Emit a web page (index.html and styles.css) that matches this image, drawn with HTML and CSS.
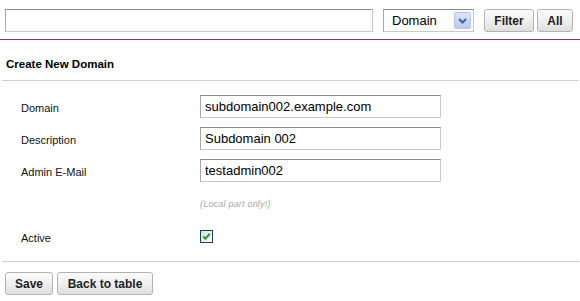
FILE: index.html
```html
<!DOCTYPE html>
<html>
<head>
<meta charset="utf-8">
<link rel="stylesheet" href="styles.css">
</head>
<body>
<div class="topbar">
  <input class="search" type="text" value="">
  <div class="select">
    <span class="select-text">Domain</span>
    <span class="select-arrow">
      <svg width="17" height="17" viewBox="0 0 17 17"><path d="M5 7 L8.5 10.5 L12 7" fill="none" stroke="#4d6185" stroke-width="2"/></svg>
    </span>
  </div>
  <button class="btn btn-filter">Filter</button>
  <button class="btn btn-all">All</button>
</div>
<div class="title">Create New Domain</div>
<div class="form">
  <div class="row row-input">
    <label class="lbl">Domain</label>
    <input class="field" type="text" value="subdomain002.example.com">
  </div>
  <div class="row row-input">
    <label class="lbl">Description</label>
    <input class="field" type="text" value="Subdomain 002">
  </div>
  <div class="row row-input">
    <label class="lbl">Admin E-Mail</label>
    <input class="field" type="text" value="testadmin002">
  </div>
  <div class="row row-hint">
    <span class="lbl"></span>
    <span class="hint">(Local part only!)</span>
  </div>
  <div class="row row-check">
    <label class="lbl">Active</label>
    <span class="check">
      <svg width="11" height="11" viewBox="0 0 11 11"><path d="M2.2 5.4 L4.4 7.8 L8.8 2.8" fill="none" stroke="#2ca02c" stroke-width="2.1"/></svg>
    </span>
  </div>
</div>
<div class="actions">
  <button class="btn btn-save">Save</button>
  <button class="btn btn-back">Back to table</button>
</div>
</body>
</html>
```
FILE: styles.css
```css
html, body {
  margin: 0;
  padding: 0;
  background: #fff;
  font-family: "Liberation Sans", Arial, sans-serif;
  color: #000;
}
.topbar {
  display: flex;
  align-items: flex-start;
  padding: 9px 0 0 5px;
  height: 30px;
  border-bottom: 1px solid #93307f;
}
.search {
  box-sizing: border-box;
  width: 368px;
  height: 23px;
  margin: 0;
  padding: 0 4px;
  border: 1px solid #c9c9c9;
  border-top-color: #8a8a8a;
  border-left-color: #a8a8a8;
  font: 13px "Liberation Sans", Arial, sans-serif;
  outline: none;
}
.select {
  box-sizing: border-box;
  display: flex;
  align-items: center;
  justify-content: space-between;
  width: 91px;
  height: 23px;
  margin-left: 10px;
  padding: 0 2px 0 8px;
  border: 1px solid #c9c9c9;
  border-top-color: #8a8a8a;
  border-left-color: #a8a8a8;
  font-size: 13px;
}
.select-text {
  line-height: 21px;
}
.select-arrow {
  display: flex;
  width: 17px;
  height: 17px;
  box-sizing: border-box;
  border: 1px solid #b4c6ee;
  border-radius: 2px;
  background: linear-gradient(#dde6fb, #b7c9f3);
}
.select-arrow svg {
  margin: -1px;
}
.btn {
  box-sizing: border-box;
  height: 23px;
  margin: 0;
  padding: 0 9px;
  border: 1px solid #b3b3b3;
  border-radius: 3px;
  background: linear-gradient(#fbfbfb 0%, #f0f0f0 50%, #dedede 100%);
  font: bold 12px "Liberation Sans", Arial, sans-serif;
  color: #222;
  cursor: pointer;
}
.btn-filter {
  width: 50px;
  margin-left: 10px;
}
.btn-all {
  width: 36px;
  margin-left: 3px;
}
.title {
  height: 40px;
  margin: 0 1px 0 2px;
  padding-left: 4px;
  border-bottom: 1px solid #cfcfcf;
  font-weight: bold;
  font-size: 11.5px;
  line-height: 49px;
}
.form {
  display: flex;
  flex-direction: column;
  padding: 14px 0 0 19px;
  height: 166px;
  margin: 0 1px 0 2px;
  border-bottom: 1px solid #cfcfcf;
  box-sizing: content-box;
}
.row {
  display: flex;
  align-items: center;
  flex: none;
}
.lbl {
  width: 179px;
  flex: none;
  font-size: 11px;
  color: #111;
  padding-top: 3px;
}
.row-input {
  height: 23px;
  margin-bottom: 9px;
}
.field {
  box-sizing: border-box;
  width: 241px;
  height: 23px;
  margin: 0;
  padding: 0 4px;
  border: 1px solid #c9c9c9;
  border-top-color: #8a8a8a;
  border-left-color: #a8a8a8;
  font: 13px "Liberation Sans", Arial, sans-serif;
  color: #000;
  outline: none;
}
.row-hint {
  height: 14px;
  margin-top: 6px;
}
.hint {
  font-style: italic;
  font-size: 9px;
  color: #a5a5a5;
  letter-spacing: 0.2px;
}
.row-check {
  height: 14px;
  margin-top: 18px;
}
.check {
  box-sizing: border-box;
  display: flex;
  align-items: center;
  justify-content: center;
  width: 13px;
  height: 13px;
  border: 1px solid #1f3f63;
  background: linear-gradient(135deg, #dcdcd6, #fdfdfd);
}
.actions {
  display: flex;
  padding: 10px 0 0 5px;
}
.btn-save {
  width: 48px;
}
.btn-back {
  width: 96px;
  margin-left: 4px;
}
```
